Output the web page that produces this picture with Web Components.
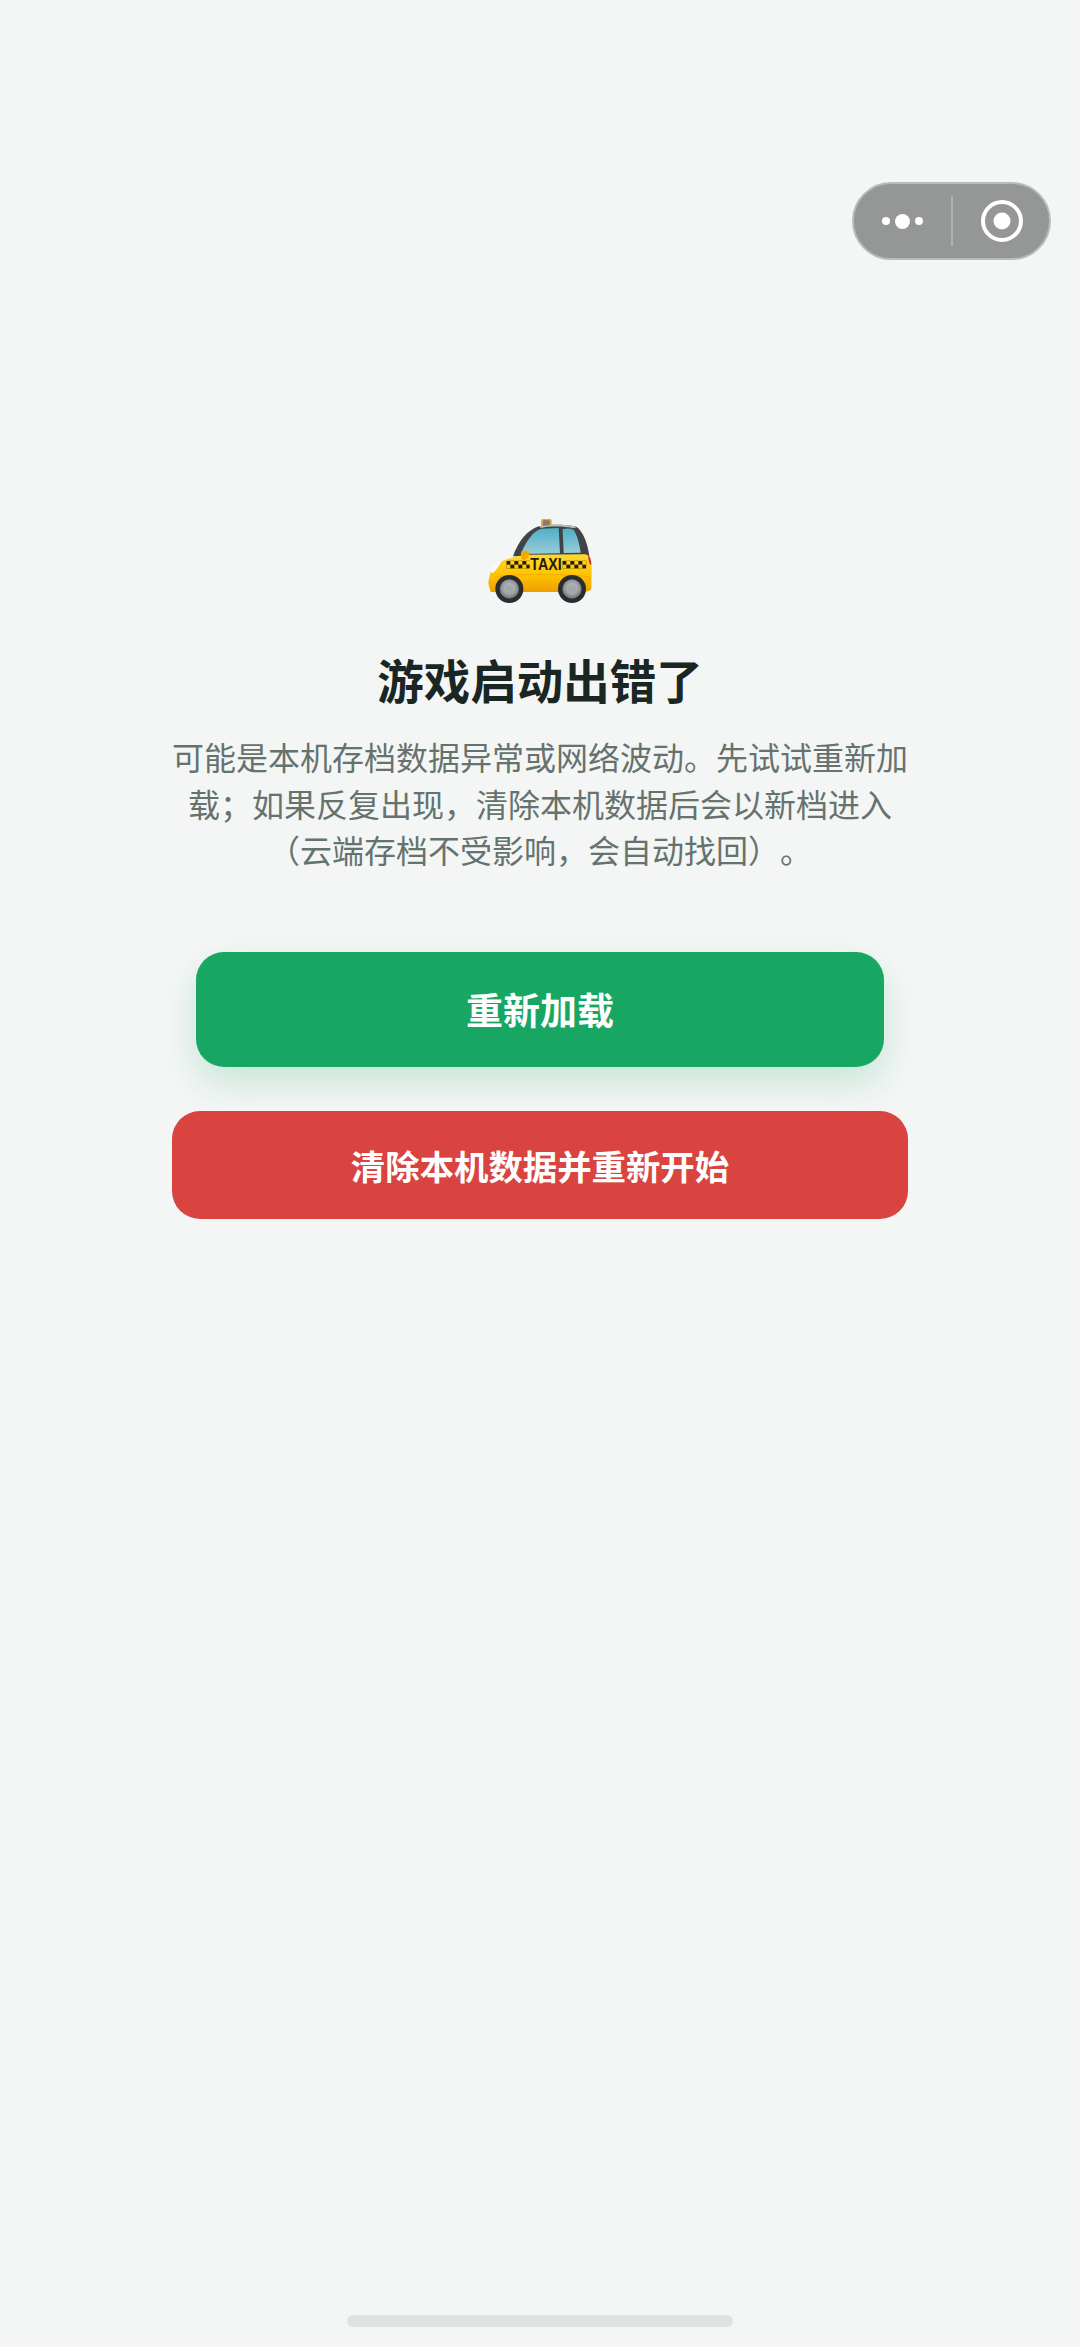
<!DOCTYPE html>
<html lang="zh">
<head>
<meta charset="utf-8">
<title>游戏启动出错了</title>
<style>
html, body { margin: 0; padding: 0; height: 100%; background: #f4f6f5; }
body { font-family: "Noto Sans CJK SC", "Noto Sans", sans-serif; }
</style>
</head>
<body>
<app-screen>
  <mini-capsule slot="overlay"></mini-capsule>
  <error-panel>
    <taxi-icon slot="icon"></taxi-icon>
    <span slot="title">游戏启动出错了</span>
    <span slot="message">可能是本机存档数据异常或网络波动。先试试重新加载；如果反复出现，清除本机数据后会以新档进入（云端存档不受影响，会自动找回）。</span>
    <action-button slot="actions" kind="primary">重新加载</action-button>
    <action-button slot="actions" kind="danger">清除本机数据并重新开始</action-button>
  </error-panel>
  <home-bar slot="footer"></home-bar>
</app-screen>

<script>
class AppScreen extends HTMLElement {
    constructor() {
        super();
        this.attachShadow({ mode: 'open' });
    }

    connectedCallback() {
        this.shadowRoot.innerHTML = `
            <style>
:host {
  display: flex;
  flex-direction: column;
  position: relative;
  height: 2347px;
  overflow: hidden;
  background: #f4f6f5;
}
main {
  flex: 1;
  display: flex;
  flex-direction: column;
  align-items: center;
  padding-top: 518px;
}
footer {
  display: flex;
  justify-content: center;
  padding-bottom: 20px;
}
            </style>
            <slot name="overlay"></slot>
            <main><slot></slot></main>
            <footer><slot name="footer"></slot></footer>
        `;
    }
}

class MiniCapsule extends HTMLElement {
    constructor() {
        super();
        this.attachShadow({ mode: 'open' });
    }

    connectedCallback() {
        this.shadowRoot.innerHTML = `
            <style>
:host {
  display: flex;
  align-items: center;
  position: absolute;
  top: 182px;
  left: 852px;
  width: 199px;
  height: 78px;
  box-sizing: border-box;
  border: 2px solid #b9bbba;
  border-radius: 39px;
  background: #959796;
}
.dots {
  flex: 0 0 97px;
  display: flex;
  align-items: center;
  justify-content: center;
  gap: 5px;
}
.dot { width: 8px; height: 8px; border-radius: 50%; background: #fff; }
.dot.big { width: 15px; height: 15px; }
.line { width: 2px; height: 50px; background: #b1b3b2; }
.target {
  flex: 1;
  display: flex;
  justify-content: center;
  padding-left: 2px;
}
svg { display: block; }
            </style>
            <div class="dots">
              <span class="dot"></span><span class="dot big"></span><span class="dot"></span>
            </div>
            <span class="line"></span>
            <div class="target">
              <svg width="42" height="42" viewBox="0 0 42 42">
                <circle cx="21" cy="21" r="19" fill="none" stroke="#fff" stroke-width="4"/>
                <circle cx="21" cy="21" r="8.5" fill="#fff"/>
              </svg>
            </div>
        `;
    }
}

class TaxiIcon extends HTMLElement {
    constructor() {
        super();
        this.attachShadow({ mode: 'open' });
    }

    connectedCallback() {
        this.shadowRoot.innerHTML = `
            <style>
:host { display: block; width: 104px; height: 86px; }
svg { display: block; }
            </style>
            <svg width="104" height="86" viewBox="80 85 312 258">
              <defs>
                <linearGradient id="paint" x1="0" y1="0" x2="0" y2="1">
                  <stop offset="0" stop-color="#ffd92e"/>
                  <stop offset="0.55" stop-color="#fdc400"/>
                  <stop offset="1" stop-color="#ee9d00"/>
                </linearGradient>
                <linearGradient id="glass" x1="0" y1="0" x2="0" y2="1">
                  <stop offset="0" stop-color="#4fb0c8"/>
                  <stop offset="1" stop-color="#98ccd8"/>
                </linearGradient>
                <radialGradient id="rim" cx="0.5" cy="0.45" r="0.6">
                  <stop offset="0" stop-color="#c9cbcc"/>
                  <stop offset="0.6" stop-color="#9a9da0"/>
                  <stop offset="1" stop-color="#5c5f63"/>
                </radialGradient>
                <pattern id="checks" x="135" y="213" width="24" height="24" patternUnits="userSpaceOnUse">
                  <rect width="12" height="12" fill="#2a1d05"/>
                  <rect x="12" y="12" width="12" height="12" fill="#2a1d05"/>
                </pattern>
              </defs>
              <rect x="239" y="88" width="32" height="22" rx="5" fill="#d8a94e"/>
              <rect x="245" y="92" width="20" height="16" rx="3" fill="#8f7a5a"/>
              <path d="M155 200 C172 152 198 122 232 110 C268 103 322 103 346 112 C366 126 380 165 384 200 Z" fill="#3f4447"/>
              <path d="M232 110 C268 103 322 103 346 112 L338 116 C310 109 262 109 240 115 Z" fill="#b9bcbe"/>
              <path d="M178 193 C194 156 214 124 240 117 L292 115 L296 191 Z" fill="url(#glass)"/>
              <path d="M304 119 C318 115 332 116 339 123 C350 143 355 168 358 189 L307 190 Z" fill="url(#glass)"/>
              <path d="M88 306 L81 282 C84 250 92 226 130 211 C150 203 172 197 200 195 L372 194 C386 196 391 216 391 242 L390 296 C389 304 378 307 360 307 L104 307 C96 307 90 308 88 306 Z" fill="url(#paint)"/>
              <path d="M100 262 C160 252 320 252 388 262" fill="none" stroke="#e9a200" stroke-width="2"/>
              <path d="M90 240 C94 226 106 218 120 215 C116 226 106 240 95 250 C90 250 89 246 90 240 Z" fill="#fbfbf6"/>
              <path d="M380 197 C387 201 390 212 390 226 C384 226 381 212 380 197 Z" fill="#c8352c"/>
              <path d="M180 186 C180 183 200 181 204 186 C206 196 198 210 186 211 C180 211 178 196 180 186 Z" fill="#f2a900"/>
              <rect x="135" y="213" width="70" height="24" fill="url(#checks)"/>
              <rect x="303" y="213" width="72" height="24" fill="url(#checks)"/>
              <text x="254" y="240" text-anchor="middle" font-family="Liberation Sans, sans-serif" font-size="48" font-weight="700" fill="#241a05" textLength="94" lengthAdjust="spacingAndGlyphs">TAXI</text>
              <circle cx="144" cy="298" r="42" fill="#2b2c2f"/>
              <circle cx="144" cy="298" r="29" fill="url(#rim)"/>
              <circle cx="144" cy="298" r="12" fill="#a5a8aa"/>
              <circle cx="332" cy="298" r="42" fill="#2b2c2f"/>
              <circle cx="332" cy="298" r="29" fill="url(#rim)"/>
              <circle cx="332" cy="298" r="12" fill="#a5a8aa"/>
            </svg>
        `;
    }
}

class ErrorPanel extends HTMLElement {
    constructor() {
        super();
        this.attachShadow({ mode: 'open' });
    }

    connectedCallback() {
        this.shadowRoot.innerHTML = `
            <style>
:host {
  display: flex;
  flex-direction: column;
  align-items: center;
  width: 736px;
}
h1 {
  margin: 43px 0 0;
  font-size: 46.5px;
  line-height: 64px;
  font-weight: 700;
  color: #1a2623;
  text-align: center;
}
p {
  margin: 22px 0 0;
  width: 736px;
  font-size: 32px;
  line-height: 46.5px;
  color: #66726e;
  text-align: center;
  text-spacing-trim: space-all;
}
.actions {
  margin-top: 79px;
  width: 100%;
  display: flex;
  flex-direction: column;
  align-items: center;
  gap: 44px;
}
            </style>
            <slot name="icon"></slot>
            <h1><slot name="title"></slot></h1>
            <p><slot name="message"></slot></p>
            <div class="actions"><slot name="actions"></slot></div>
        `;
    }
}

class ActionButton extends HTMLElement {
    constructor() {
        super();
        this.attachShadow({ mode: 'open' });
    }

    connectedCallback() {
        this.shadowRoot.innerHTML = `
            <style>
:host {
  display: flex;
  align-items: center;
  justify-content: center;
  box-sizing: border-box;
  color: #fff;
  font-weight: 700;
  cursor: pointer;
}
:host([kind="primary"]) {
  width: 688px;
  height: 115px;
  border-radius: 28px;
  background: #18a763;
  font-size: 37px;
  box-shadow: 0 16px 36px rgba(24, 167, 99, 0.2);
}
:host([kind="danger"]) {
  width: 736px;
  height: 108px;
  border-radius: 28px;
  background: #d94440;
  font-size: 34.4px;
}
            </style>
            <slot></slot>
        `;
    }
}

class HomeBar extends HTMLElement {
    constructor() {
        super();
        this.attachShadow({ mode: 'open' });
    }

    connectedCallback() {
        this.shadowRoot.innerHTML = `
            <style>
:host {
  display: block;
  width: 386px;
  height: 12px;
  border-radius: 6px;
  background: #e0e2e1;
}
            </style>
        `;
    }
}

customElements.define('app-screen', AppScreen);
customElements.define('mini-capsule', MiniCapsule);
customElements.define('taxi-icon', TaxiIcon);
customElements.define('error-panel', ErrorPanel);
customElements.define('action-button', ActionButton);
customElements.define('home-bar', HomeBar);
</script>
</body>
</html>
